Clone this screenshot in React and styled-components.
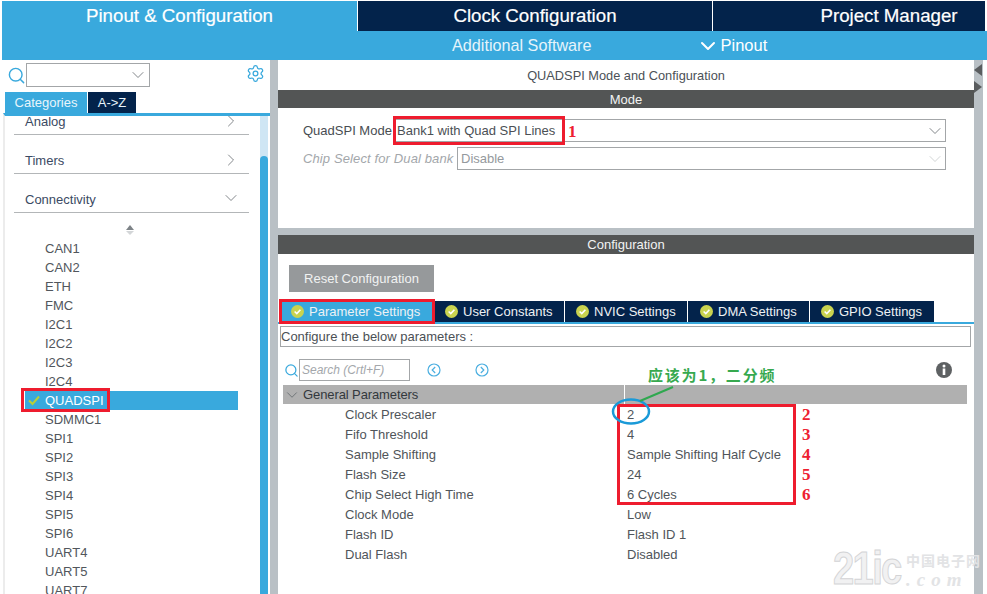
import React from "react";
import styled, { createGlobalStyle } from "styled-components";
import { ChevronDown, ChevronRight, Search, Settings } from "lucide-react";

const GlobalStyle = createGlobalStyle`
  html, body {
    margin: 0;
    padding: 0;
    background: #fff;
    overflow: hidden;
  }
  * {
    box-sizing: border-box;
  }
`;

const Page = styled.div`
  position: relative;
  width: 987px;
  height: 594px;
  padding: 1px 0 0 2px;
  overflow: hidden;
  font-family: "Liberation Sans", Arial, sans-serif;
  background: #fff;
`;

const TopTabs = styled.div`
  display: flex;
  height: 30px;
  background: #fff;
`;

const TopTab = styled.div`
  width: ${(p) => p.$width}px;
  margin-right: ${(p) => (p.$last ? 0 : 1)}px;
  padding-top: 3px;
  padding-left: ${(p) => p.$shift || 0}px;
  text-align: center;
  font-size: 18.7px;
  line-height: 24px;
  color: #fff;
  background: ${(p) => (p.$active ? "#39a9dd" : "#03234b")};
  -webkit-text-stroke: 0.2px #fff;
`;

const SubBar = styled.div`
  display: flex;
  align-items: center;
  height: 29px;
  padding-left: 450px;
  background: #39a9dd;
  color: #e6f4fb;
  font-size: 16.2px;
`;

const PinoutLink = styled.div`
  display: flex;
  align-items: center;
  margin-left: 105px;
  font-size: 16.5px;
  color: #fff;
`;

const Body = styled.div`
  display: flex;
  height: 534px;
  background: #fff;
`;

const LeftPanel = styled.div`
  display: flex;
  flex-direction: column;
  width: 268px;
  background: #fff;
`;

const SearchRow = styled.div`
  display: flex;
  align-items: flex-start;
  height: 32px;
  padding: 3px 0 0 5px;
`;

const SearchSlot = styled.div`
  display: flex;
  margin-top: 3px;
  color: #39a9dd;
`;

const Combo = styled.div`
  display: flex;
  align-items: center;
  justify-content: flex-end;
  width: 124px;
  height: 24px;
  padding-right: 1px;
  border: 1px solid #a3a6a8;
  background: #fff;
  color: #6a6f73;
`;

const GearSlot = styled.div`
  display: flex;
  margin: 1px 0 0 96px;
  color: #39a9dd;
`;

const SideTabs = styled.div`
  display: flex;
  height: 21px;
  padding-left: 3px;
`;

const SideTab = styled.div`
  width: ${(p) => p.$width}px;
  margin-right: 1px;
  text-align: center;
  font-size: 13px;
  line-height: 21px;
  color: #e8f5fb;
  background: ${(p) => (p.$active ? "#39a9dd" : "#03234b")};
`;

const TreeFrame = styled.div`
  display: flex;
  flex: 1;
  min-height: 0;
  margin-left: 1px;
  border-top: 3px solid #39a9dd;
  border-left: 2px solid #ececec;
  overflow: hidden;
`;

const TreeList = styled.div`
  width: 254px;
  flex: none;
  padding-left: 9px;
`;

const CategoryRow = styled.div`
  display: flex;
  align-items: flex-end;
  justify-content: space-between;
  width: 235px;
  height: ${(p) => p.$height}px;
  padding: 0 8px 3px 11px;
  border-bottom: 1px solid #b3b6b8;
  font-size: 13px;
  line-height: 14px;
  color: #3b4a63;
`;

const CategoryName = styled.span`
  margin-bottom: 2px;
`;

const ChevronSlot = styled.div`
  display: flex;
  margin-bottom: ${(p) => p.$lift || 0}px;
  color: #6a6f73;
`;

const SortMark = styled.div`
  display: flex;
  flex-direction: column;
  align-items: center;
  gap: 1px;
  height: 26px;
  width: 231px;
  padding: 12px 0 0 0;
`;

const SortUp = styled.div`
  width: 0;
  height: 0;
  border-left: 4px solid transparent;
  border-right: 4px solid transparent;
  border-bottom: 5px solid #7d8387;
`;

const SortDown = styled(SortUp)`
  border-bottom: 0;
  border-top: 4px solid #d3d6d8;
`;

const PeripheralRow = styled.div`
  position: relative;
  width: 213px;
  height: 19px;
  margin-left: 11px;
  padding-left: 20px;
  font-size: 13px;
  line-height: 19px;
  color: ${(p) => (p.$selected ? "#fff" : "#51565c")};
  background: ${(p) => (p.$selected ? "#39a9dd" : "transparent")};
`;

const RowCheck = styled.svg`
  position: absolute;
  left: 3px;
  top: 4px;
`;

const ScrollTrack = styled.div`
  width: 8px;
  margin-left: 1px;
  padding-top: 40px;
  background: #cfe6f4;
`;

const ScrollThumb = styled.div`
  height: 100%;
  border-radius: 4px 4px 0 0;
  background: #39a9dd;
`;

const Gutter = styled.div`
  width: 8px;
  background: #b9c0c5;
`;

const RightPanel = styled.div`
  display: flex;
  flex-direction: column;
  width: 696px;
  background: #b9c0c5;
`;

const ModePanel = styled.div`
  height: 168px;
  margin-bottom: 7px;
  background: #fff;
`;

const PanelTitle = styled.div`
  height: 30px;
  padding-top: 8px;
  text-align: center;
  font-size: 12.8px;
  line-height: 15px;
  color: #4b5157;
`;

const DarkHeader = styled.div`
  height: ${(p) => p.$height}px;
  text-align: center;
  font-size: 13px;
  line-height: ${(p) => p.$height + 1}px;
  color: #f2f3f3;
  background: #535555;
`;

const ModeRows = styled.div`
  padding: 11px 28px 0 25px;
`;

const ModeRow = styled.div`
  display: flex;
  align-items: center;
  height: 23px;
  margin-bottom: 5px;
`;

const ModeLabel = styled.div`
  width: ${(p) => p.$width}px;
  font-size: 13px;
  font-style: ${(p) => (p.$disabled ? "italic" : "normal")};
  letter-spacing: ${(p) => (p.$disabled ? 0.12 : 0)}px;
  color: ${(p) => (p.$disabled ? "#a3a7ab" : "#484d52")};
  white-space: nowrap;
`;

const ModeSelect = styled.div`
  display: flex;
  flex: 1;
  align-items: center;
  justify-content: space-between;
  height: 23px;
  padding-left: 3px;
  border: 1px solid #a3a6a8;
  font-size: 13px;
  color: ${(p) => (p.$disabled ? "#94999d" : "#4b5055")};
`;

const ConfigPanel = styled.div`
  flex: 1;
  background: #fff;
`;

const ResetButton = styled.div`
  width: 145px;
  height: 27px;
  margin: 11px 0 9px 11px;
  text-align: center;
  font-size: 13px;
  line-height: 27px;
  color: #f1f2f2;
  background: #96999b;
`;

const ConfigTabs = styled.div`
  display: flex;
  height: 23px;
  padding-left: 2px;
  border-bottom: 2px solid #39a9dd;
`;

const ConfigTab = styled.div`
  display: flex;
  align-items: center;
  gap: 5px;
  width: ${(p) => p.$width}px;
  height: 21px;
  margin-right: 1px;
  padding-left: ${(p) => p.$pad}px;
  font-size: 13px;
  color: #eef1f4;
  background: ${(p) => (p.$active ? "#39a9dd" : "#03234b")};
`;

const ConfigureBox = styled.div`
  width: 691px;
  height: 21px;
  margin: 2px 0 12px 2px;
  border: 1px solid #a3a6a8;
  font-size: 13px;
  line-height: 19px;
  color: #4b5055;
`;

const ParamToolbar = styled.div`
  display: flex;
  align-items: center;
  height: 22px;
  margin-bottom: 4px;
  padding-left: 6px;
  color: #39a9dd;
`;

const SearchInput = styled.div`
  width: 111px;
  height: 22px;
  padding-left: 2px;
  border: 1px solid #a3a6a8;
  font-size: 12px;
  font-style: italic;
  line-height: 20px;
  color: #a3a7ab;
`;

const NavButton = styled.svg`
  margin-left: ${(p) => p.$gap}px;
`;

const InfoMark = styled.svg`
  margin-left: 447px;
`;

const ParamTable = styled.div`
  margin-left: 5px;
  width: 684px;
`;

const SectionRow = styled.div`
  display: grid;
  grid-template-columns: 342px 1fr;
  height: 19px;
  background: #b0b0b0;
`;

const SectionName = styled.div`
  display: flex;
  align-items: center;
  gap: 2px;
  border-right: 1px solid #fff;
  font-size: 13px;
  letter-spacing: -0.1px;
  color: #33383d;
`;

const ParamRow = styled.div`
  display: grid;
  grid-template-columns: 342px 1fr;
  height: 20px;
  font-size: 13px;
  line-height: 21px;
  color: #50555a;
`;

const ParamName = styled.div`
  padding-left: 62px;
`;

const ParamValue = styled.div`
  padding-left: 2px;
`;

const RightStrip = styled.div`
  display: flex;
  flex-direction: column;
  width: 9px;
  padding-top: 4px;
  background: #b9c0c5;
`;

const StripArrow = styled.div`
  width: 0;
  height: 0;
  margin-bottom: 5px;
  border-top: 6px solid transparent;
  border-bottom: 6px solid transparent;
  ${(p) =>
    p.$left
      ? "border-right: 8px solid #5a5d5f;"
      : "border-left: 8px solid #5a5d5f;"}
`;

/* annotations drawn over the screenshot */
const RedBox = styled.div`
  position: absolute;
  left: ${(p) => p.$x}px;
  top: ${(p) => p.$y}px;
  width: ${(p) => p.$w}px;
  height: ${(p) => p.$h}px;
  border: 3px solid #ee1c2e;
`;

const RedNumber = styled.div`
  position: absolute;
  left: ${(p) => p.$x}px;
  top: ${(p) => p.$y}px;
  font-family: "Liberation Serif", serif;
  font-size: 17px;
  font-weight: bold;
  line-height: 20px;
  color: #ee2030;
`;

const NoteLayer = styled.svg`
  position: absolute;
  left: 0;
  top: 0;
  pointer-events: none;
`;

const GreenNote = styled.div`
  position: absolute;
  left: 648px;
  top: 365px;
  font-family: "Noto Sans CJK SC", "Liberation Serif", serif;
  font-size: 15px;
  font-weight: bold;
  line-height: 20px;
  letter-spacing: 1.8px;
  color: #37a94f;
  white-space: nowrap;
`;

const Watermark = styled.div`
  position: absolute;
  left: 833px;
  top: 550px;
  display: flex;
  align-items: flex-start;
  color: #f1f1f2;
  white-space: nowrap;
`;

const MarkBig = styled.div`
  width: 69px;
  font-size: 46px;
  font-weight: bold;
  line-height: 36px;
  letter-spacing: -2px;
  transform: scaleX(0.83);
  transform-origin: left;
  -webkit-text-stroke: 1px #d3d4d6;
`;

const MarkSide = styled.div`
  display: flex;
  flex-direction: column;
  gap: 0;
  margin-left: 4px;
`;

const MarkCn = styled.div`
  font-family: "Noto Sans CJK SC", sans-serif;
  font-size: 14px;
  font-weight: bold;
  line-height: 20px;
  letter-spacing: 1px;
  color: #e2e3e5;
`;

const MarkCom = styled.div`
  font-family: "Liberation Serif", serif;
  font-size: 19px;
  font-weight: bold;
  font-style: italic;
  line-height: 19px;
  letter-spacing: 6px;
  color: #e2e3e5;
`;

const PERIPHERALS = [
  "CAN1", "CAN2", "ETH", "FMC", "I2C1", "I2C2", "I2C3", "I2C4", "QUADSPI", "SDMMC1",
  "SPI1", "SPI2", "SPI3", "SPI4", "SPI5", "SPI6", "UART4", "UART5", "UART7",
];

const PARAMS = [
  ["Clock Prescaler", "2"],
  ["Fifo Threshold", "4"],
  ["Sample Shifting", "Sample Shifting Half Cycle"],
  ["Flash Size", "24"],
  ["Chip Select High Time", "6 Cycles"],
  ["Clock Mode", "Low"],
  ["Flash ID", "Flash ID 1"],
  ["Dual Flash", "Disabled"],
];

const TABS = [
  ["Parameter Settings", 154, 11, true],
  ["User Constants", 129, 10],
  ["NVIC Settings", 122, 11],
  ["DMA Settings", 121, 12],
  ["GPIO Settings", 124, 11],
];

const OkIcon = () => (
  <svg width="13" height="13" viewBox="0 0 13 13">
    <circle cx="6.5" cy="6.5" r="6.5" fill="#c9d34f" />
    <path d="M3.6 6.5 L5.8 8.6 L9.4 4.8" fill="none" stroke="#fff" strokeWidth="1.6" />
  </svg>
);

const CircleNav = ({ gap, left }) => (
  <NavButton $gap={gap} width="14" height="14" viewBox="0 0 14 14">
    <circle cx="7" cy="7" r="6" fill="none" stroke="#4aaee0" strokeWidth="1.2" />
    <path
      d={left ? "M8.2 4 L5.2 7 L8.2 10" : "M5.8 4 L8.8 7 L5.8 10"}
      fill="none"
      stroke="#4aaee0"
      strokeWidth="1.2"
    />
  </NavButton>
);

export default function App() {
  return (
    <Page>
      <GlobalStyle />
      <TopTabs>
        <TopTab $width={355} $active>Pinout &amp; Configuration</TopTab>
        <TopTab $width={354}>Clock Configuration</TopTab>
        <TopTab $width={272} $last $shift={80}>Project Manager</TopTab>
      </TopTabs>
      <SubBar>
        Additional Software
        <PinoutLink>
          <ChevronDown size={24} strokeWidth={2} />
          Pinout
        </PinoutLink>
      </SubBar>
      <Body>
        <LeftPanel>
          <SearchRow>
            <SearchSlot>
              <Search size={19} strokeWidth={1.8} />
            </SearchSlot>
            <Combo>
              <ChevronDown size={20} strokeWidth={1} />
            </Combo>
            <GearSlot>
              <Settings size={19} strokeWidth={1.6} />
            </GearSlot>
          </SearchRow>
          <SideTabs>
            <SideTab $width={82} $active>Categories</SideTab>
            <SideTab $width={48}>A-&gt;Z</SideTab>
          </SideTabs>
          <TreeFrame>
            <TreeList>
              <CategoryRow $height={19}>
                <CategoryName>Analog</CategoryName>
                <ChevronSlot>
                  <ChevronRight size={20} strokeWidth={1} />
                </ChevronSlot>
              </CategoryRow>
              <CategoryRow $height={39}>
                <CategoryName>Timers</CategoryName>
                <ChevronSlot>
                  <ChevronRight size={20} strokeWidth={1} />
                </ChevronSlot>
              </CategoryRow>
              <CategoryRow $height={39}>
                <CategoryName>Connectivity</CategoryName>
                <ChevronSlot $lift={1}>
                  <ChevronDown size={20} strokeWidth={1} />
                </ChevronSlot>
              </CategoryRow>
              <SortMark>
                <SortUp />
                <SortDown />
              </SortMark>
              {PERIPHERALS.map((name) => (
                <PeripheralRow key={name} $selected={name === "QUADSPI"}>
                  {name === "QUADSPI" && (
                    <RowCheck width="12" height="11" viewBox="0 0 12 11">
                      <path d="M1 5.5 L4.5 9 L11 1.5" fill="none" stroke="#b7cf3a" strokeWidth="2" />
                    </RowCheck>
                  )}
                  {name}
                </PeripheralRow>
              ))}
            </TreeList>
            <ScrollTrack>
              <ScrollThumb />
            </ScrollTrack>
          </TreeFrame>
        </LeftPanel>
        <Gutter />
        <RightPanel>
          <ModePanel>
            <PanelTitle>QUADSPI Mode and Configuration</PanelTitle>
            <DarkHeader $height={18}>Mode</DarkHeader>
            <ModeRows>
              <ModeRow>
                <ModeLabel $width={90}>QuadSPI Mode</ModeLabel>
                <ModeSelect>
                  Bank1 with Quad SPI Lines
                  <ChevronDown size={20} strokeWidth={1} color="#6a6f73" />
                </ModeSelect>
              </ModeRow>
              <ModeRow>
                <ModeLabel $width={154} $disabled>Chip Select for Dual bank</ModeLabel>
                <ModeSelect $disabled>
                  Disable
                  <ChevronDown size={20} strokeWidth={1} color="#c9ccce" />
                </ModeSelect>
              </ModeRow>
            </ModeRows>
          </ModePanel>
          <ConfigPanel>
            <DarkHeader $height={19}>Configuration</DarkHeader>
            <ResetButton>Reset Configuration</ResetButton>
            <ConfigTabs>
              {TABS.map(([label, width, pad, active]) => (
                <ConfigTab key={label} $width={width} $pad={pad} $active={active}>
                  <OkIcon />
                  {label}
                </ConfigTab>
              ))}
            </ConfigTabs>
            <ConfigureBox>Configure the below parameters :</ConfigureBox>
            <ParamToolbar>
              <Search size={15} strokeWidth={2} />
              <SearchInput>Search (Crtl+F)</SearchInput>
              <CircleNav gap={17} left />
              <CircleNav gap={34} />
              <InfoMark width="16" height="16" viewBox="0 0 16 16">
                <circle cx="8" cy="8" r="8" fill="#5e6163" />
                <circle cx="8" cy="4" r="1.5" fill="#fff" />
                <rect x="6.7" y="6.5" width="2.6" height="6.5" fill="#fff" />
              </InfoMark>
            </ParamToolbar>
            <ParamTable>
              <SectionRow>
                <SectionName>
                  <ChevronDown size={18} strokeWidth={1.2} color="#6a6f73" />
                  General Parameters
                </SectionName>
              </SectionRow>
              {PARAMS.map(([name, value]) => (
                <ParamRow key={name}>
                  <ParamName>{name}</ParamName>
                  <ParamValue>{value}</ParamValue>
                </ParamRow>
              ))}
            </ParamTable>
          </ConfigPanel>
        </RightPanel>
        <RightStrip>
          <StripArrow $left />
          <StripArrow />
        </RightStrip>
      </Body>

      <RedBox $x={393} $y={116} $w={172} $h={29} />
      <RedNumber $x={568} $y={122}>1</RedNumber>
      <RedBox $x={21} $y={388} $w={89} $h={24} />
      <RedBox $x={279} $y={299} $w={156} $h={25} />
      <RedBox $x={617} $y={404} $w={179} $h={101} />
      <RedNumber $x={802} $y={405}>2</RedNumber>
      <RedNumber $x={802} $y={425}>3</RedNumber>
      <RedNumber $x={802} $y={445}>4</RedNumber>
      <RedNumber $x={802} $y={465}>5</RedNumber>
      <RedNumber $x={802} $y={485}>6</RedNumber>
      <NoteLayer width="987" height="594" viewBox="0 0 987 594">
        <ellipse cx="631" cy="411.5" rx="18" ry="12" fill="none" stroke="#1a9ad8" strokeWidth="2.5" />
        <path d="M640 401 L673 387" stroke="#2fa84f" strokeWidth="2" />
      </NoteLayer>
      <GreenNote>应该为1，二分频</GreenNote>
      <Watermark>
        <MarkBig>21ic</MarkBig>
        <MarkSide>
          <MarkCn>中国电子网</MarkCn>
          <MarkCom>.com</MarkCom>
        </MarkSide>
      </Watermark>
    </Page>
  );
}
